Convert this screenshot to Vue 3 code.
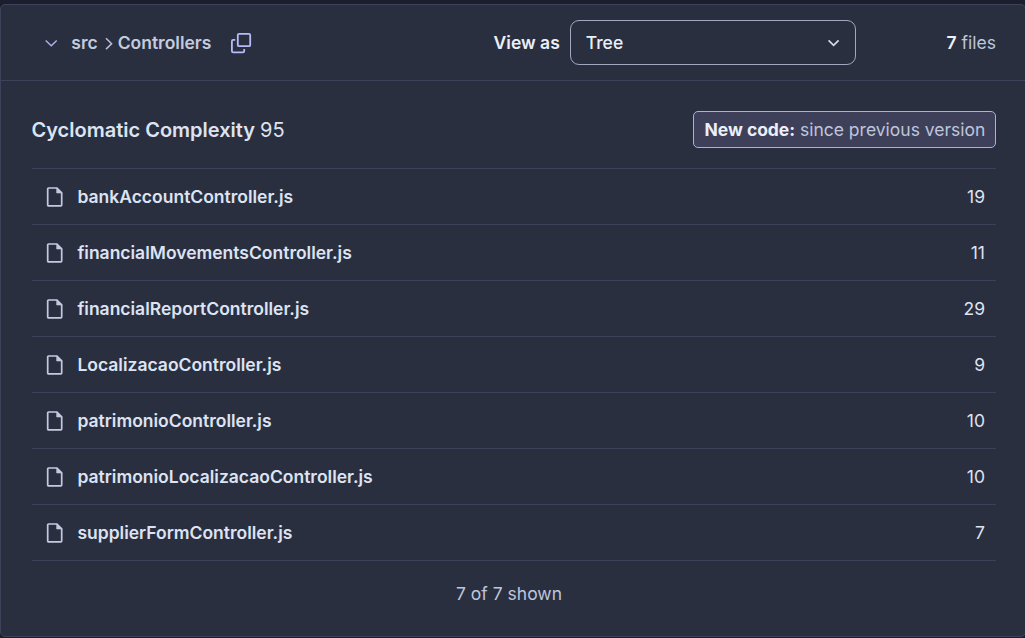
<script setup>
const files = [
  { name: 'bankAccountController.js', value: 19 },
  { name: 'financialMovementsController.js', value: 11 },
  { name: 'financialReportController.js', value: 29 },
  { name: 'LocalizacaoController.js', value: 9 },
  { name: 'patrimonioController.js', value: 10 },
  { name: 'patrimonioLocalizacaoController.js', value: 10 },
  { name: 'supplierFormController.js', value: 7 },
]
</script>

<template>
  <main class="page">
    <section class="panel">
      <header class="toolbar">
        <nav class="crumbs">
          <svg class="chev" width="14" height="10" viewBox="0 0 14 10"><path d="M1.7 2.5 7.3 7.8l5.4-5.3" /></svg>
          <span class="crumb">src</span>
          <svg class="sep" width="8" height="14" viewBox="0 0 8 14"><path d="M1 2.3 6.6 7.7 1 13.1" /></svg>
          <span class="crumb">Controllers</span>
          <svg class="copy" width="22" height="22" viewBox="0 0 22 22">
            <rect x="7.8" y="1.8" width="12.4" height="12.4" rx="1.3" />
            <path d="M5.2 7.9H3.2A1.3 1.3 0 0 0 1.9 9.2v9.9a1.3 1.3 0 0 0 1.3 1.3h9.7a1.3 1.3 0 0 0 1.3-1.3v-2.2" />
          </svg>
        </nav>
        <div class="view">
          <span class="label">View as</span>
          <div class="select">
            <span>Tree</span>
            <svg width="14" height="10" viewBox="0 0 14 10"><path d="M1.6 2.4 6.6 7.4l5-5" /></svg>
          </div>
        </div>
        <div class="count"><b>7</b> files</div>
      </header>
      <div class="content">
        <div class="heading">
          <h1>Cyclomatic Complexity <span>95</span></h1>
          <div class="badge"><b>New code:</b> since previous version</div>
        </div>
        <ul class="list">
          <li v-for="f in files" :key="f.name">
            <svg width="18" height="20" viewBox="0 0 18 20">
              <path d="M2.6 1h8.3L15.7 5.8V18a.9.9 0 0 1-.9.9H2.6a.9.9 0 0 1-.9-.9V1.9A.9.9 0 0 1 2.6 1z" />
              <path class="fold" d="M10.7 1v5h5z" />
            </svg>
            <span class="name">{{ f.name }}</span>
            <span class="value">{{ f.value }}</span>
          </li>
        </ul>
        <p class="shown">7 of 7 shown</p>
      </div>
    </section>
  </main>
</template>

<style>
body { background: #1b1e2c; }
</style>

<style scoped>
* { box-sizing: border-box; }
.page { height: 638px; padding-top: 4px; font: 400 17.5px/25px Inter, "Liberation Sans", sans-serif; color: #bdc6dc; overflow: hidden; }
.panel { width: 1026px; height: 633px; border: 1px solid #3e4259; border-radius: 5px; background: #2a2f40; }
.toolbar { display: flex; align-items: center; height: 76px; padding: 0 29px 0 43px; border-bottom: 1px solid #3e4259; }
svg { fill: none; flex: none; }
.crumbs { display: flex; align-items: center; width: 449.6px; font-weight: 600; color: #c3cbdf; }
.chev { stroke: #b0b5f2; stroke-width: 1.3; margin-right: 13.3px; }
.sep { stroke: #b9c2d8; stroke-width: 1.5; margin: 0 5px 0 7px; }
.copy { stroke: #b5bcf7; stroke-width: 1.8; margin-left: 18.6px; }
.view { display: flex; align-items: center; gap: 10px; color: #ebeffa; }
.label { font-weight: 600; }
.select { display: flex; align-items: center; justify-content: space-between; width: 286px; height: 45px; padding: 0 14px 0 15px; border: 1px solid #a2a7bf; border-radius: 9px; font-weight: 500; }
.select svg { stroke: #d5daea; stroke-width: 1.7; }
.count { margin-left: auto; }
.count b { font-weight: 600; color: #ebeffa; }
.content { padding: 30px 29px 0 31px; }
.heading { display: flex; align-items: center; justify-content: space-between; height: 37px; }
h1 { margin: 0 0 0 -0.6px; padding-top: 2px; font-size: 20px; font-weight: 600; color: #dde3f2; }
h1 span { font-weight: 400; }
.badge { height: 37px; width: 303px; padding: 0 10px 0 10.5px; line-height: 35px; white-space: nowrap; border: 1px solid #a9aef0; border-radius: 5px; background: #3e4059; }
.badge b { font-weight: 700; letter-spacing: -0.04px; color: #ebeffa; }
.list { list-style: none; margin: 20px 0 0; padding: 0; border-top: 1px solid #3e4259; }
li { display: flex; align-items: center; height: 56px; padding: 0 11px 0 14px; border-bottom: 1px solid #3e4259; color: #dde3f2; }
li svg { stroke: #c3cbdf; stroke-width: 1.7; margin-right: 13.4px; }
.fold { fill: #c3cbdf; stroke-width: .6; }
.name { font-weight: 600; }
.value { margin-left: auto; }
.shown { margin: 20px 10px 0 0; text-align: center; }
</style>
